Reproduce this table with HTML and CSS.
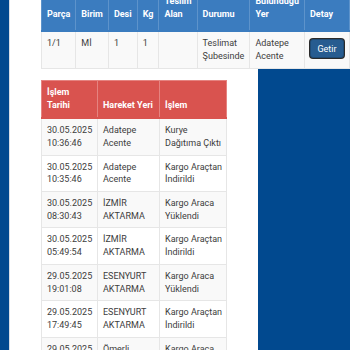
FILE: index.html
```html
<!DOCTYPE html>
<html lang="tr">
<head>
<meta charset="utf-8">
<link rel="stylesheet" href="styles.css">
</head>
<body>
<div class="panel">
  <table class="tbl tbl-parts">
    <thead>
      <tr>
        <th>Parça</th><th>Birim</th><th>Desi</th><th>Kg</th><th>Teslim Alan</th><th>Durumu</th><th>Bulunduğu Yer</th><th>Detay</th>
      </tr>
    </thead>
    <tbody>
      <tr>
        <td>1/1</td><td>Mİ</td><td>1</td><td>1</td><td></td><td>Teslimat Şubesinde</td><td>Adatepe Acente</td><td class="cell-btn"><button class="btn">Getir</button></td>
      </tr>
    </tbody>
  </table>

  <table class="tbl tbl-moves">
    <thead>
      <tr>
        <th class="c1">İşlem Tarihi</th><th class="c2">Hareket Yeri</th><th class="c3">İşlem</th>
      </tr>
    </thead>
    <tbody>
      <tr><td>30.05.2025 10:36:46</td><td>Adatepe Acente</td><td>Kurye Dağıtıma Çıktı</td></tr>
      <tr><td>30.05.2025 10:35:46</td><td>Adatepe Acente</td><td>Kargo Araçtan İndirildi</td></tr>
      <tr><td>30.05.2025 08:30:43</td><td>İZMİR AKTARMA</td><td>Kargo Araca Yüklendi</td></tr>
      <tr><td>30.05.2025 05:49:54</td><td>İZMİR AKTARMA</td><td>Kargo Araçtan İndirildi</td></tr>
      <tr><td>29.05.2025 19:01:08</td><td>ESENYURT AKTARMA</td><td>Kargo Araca Yüklendi</td></tr>
      <tr><td>29.05.2025 17:49:45</td><td>ESENYURT AKTARMA</td><td>Kargo Araçtan İndirildi</td></tr>
      <tr><td>29.05.2025 15:12:30</td><td>Ömerli Acente</td><td>Kargo Araca Yüklendi</td></tr>
    </tbody>
  </table>
</div>
</body>
</html>
```

FILE: styles.css
```css
html, body {
  margin: 0;
  padding: 0;
  background: #01498f;
  font-family: Roboto, "Noto Sans", sans-serif;
  font-size: 9px;
  line-height: 12.7px;
  color: #3d3d3d;
  overflow: hidden;
}

.panel {
  width: 186px;
  margin-left: 9px;
  padding: 0 31px 40px 31px;
  background: #fff;
  border-left: 1px solid #d7dde5;
  min-height: 400px;
}

.tbl {
  width: 100%;
  border-collapse: collapse;
  border-spacing: 0;
}

.tbl th {
  text-align: left;
  vertical-align: bottom;
  font-weight: 700;
  color: #fff;
  padding: 5px 5px 6px;
}

.tbl td {
  vertical-align: top;
  padding: 5px 2px 5px 5px;
  border: 1px solid #e6e6e6;
}

.tbl tbody tr:nth-child(odd) td {
  background: #f9f9f9;
}

.tbl tbody tr:nth-child(even) td {
  background: #fff;
}

.tbl-parts {
  margin-top: -13px;
  margin-bottom: 11px;
}

.tbl-parts th {
  background: #3b7cbf;
  border: 1px solid #5d93cb;
  border-bottom: 2px solid #3b7cbf;
  padding: 7px 5px 10px;
}

.tbl-parts td {
  padding: 5px 5px 5px 5px;
}

.tbl-moves th {
  background: #d9534f;
  border: 1px solid #e58380;
  border-bottom: 2px solid #d9534f;
}

.tbl-moves .c1 { width: 45px; }
.tbl-moves .c2 { width: 51px; }

.btn {
  box-sizing: border-box;
  width: 34px;
  height: 19px;
  font-family: Roboto, "Noto Sans", sans-serif;
  font-size: 9px;
  line-height: 12px;
  color: #fff;
  background: #275c90;
  border: 1px solid #1f4b75;
  border-radius: 3px;
  padding: 0;
  margin-top: 2px;
  box-shadow: 0 0 0 1px #2b2b2b;
}
```
